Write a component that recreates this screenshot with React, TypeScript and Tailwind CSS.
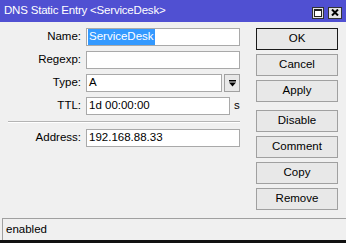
import React from "react";

const font = { fontFamily: '"Liberation Sans", Arial, sans-serif' };

function Field({ label, children }: { label: string; children: React.ReactNode }) {
  return (
    <div className="flex items-center h-[18px]">
      <div className="w-[82px] text-right pr-[1px]">{label}</div>
      <div className="ml-[4px] flex items-center">{children}</div>
    </div>
  );
}

function Input({ width, value, selected }: { width: string; value?: string; selected?: boolean }) {
  return (
    <div className={`${width} h-[18px] bg-white border border-[#a9a9a9] flex items-center px-[1px] leading-none`}>
      {selected ? (
        <span className="bg-[#3399ff] text-white px-[1px] py-[2px]">{value}</span>
      ) : (
        <span className="px-[1px]">{value}</span>
      )}
    </div>
  );
}

function Btn({ label, primary, className = "" }: { label: string; primary?: boolean; className?: string }) {
  return (
    <div
      className={`w-[82px] h-[22px] flex items-center justify-center bg-[#e8e8e8] border ${
        primary ? "border-[#1a1a1a]" : "border-[#a0a0a0]"
      } ${className}`}
    >
      {label}
    </div>
  );
}

export default function App() {
  return (
    <div className="w-[346px] h-[243px] flex flex-col bg-[#f0f0f0] text-black text-[11.5px] overflow-hidden" style={font}>
      {/* title bar */}
      <div className="h-[22px] bg-[#5050d2] flex items-center pl-[4px] pr-[4px] text-white text-[11.5px]">
        <span className="flex-1 tracking-[-0.2px]">DNS Static Entry &lt;ServiceDesk&gt;</span>
        <div className="flex gap-[4px] mt-[3px]">
          <div className="w-[12px] h-[12px] bg-[#e4e4e4] border border-[#333] flex items-center justify-center">
            <div className="w-[8px] h-[8px] border border-[#222] border-t-2 bg-white" />
          </div>
          <div className="w-[14px] h-[12px] bg-[#e4e4e4] border border-[#333] flex items-center justify-center">
            <svg width="8" height="7" viewBox="0 0 8 7">
              <path d="M1 0.5 L7 6.5 M7 0.5 L1 6.5" stroke="#000" strokeWidth="2" />
            </svg>
          </div>
        </div>
      </div>

      {/* body */}
      <div className="flex-1 flex">
        <div className="w-[248px] pt-[6px] flex flex-col gap-[5px]">
          <Field label="Name:">
            <Input width="w-[154px]" value="ServiceDesk" selected />
          </Field>
          <Field label="Regexp:">
            <Input width="w-[154px]" />
          </Field>
          <Field label="Type:">
            <Input width="w-[136px]" value="A" />
            <div className="ml-[2px] w-[16px] h-[18px] bg-[#e8e8e8] border border-[#a0a0a0] flex items-center justify-center">
              <svg width="7" height="7" viewBox="0 0 7 7">
                <rect x="0" y="0" width="7" height="1.5" fill="#000" />
                <path d="M0 2.5 H7 L3.5 6.5 Z" fill="#000" />
              </svg>
            </div>
          </Field>
          <Field label="TTL:">
            <Input width="w-[144px]" value="1d 00:00:00" />
            <span className="ml-[4px]">s</span>
          </Field>
          <div className="ml-[8px] w-[232px] h-[2px] mt-[1px] mb-[1px] border-t border-[#b4b4b4] border-b border-b-white" />
          <Field label="Address:">
            <Input width="w-[154px]" value="192.168.88.33" />
          </Field>
        </div>

        <div className="pt-[6px] pl-[8px] flex flex-col gap-[4px]">
          <Btn label="OK" primary />
          <Btn label="Cancel" />
          <Btn label="Apply" />
          <Btn label="Disable" className="mt-[4px]" />
          <Btn label="Comment" />
          <Btn label="Copy" />
          <Btn label="Remove" />
        </div>
      </div>

      {/* status bar */}
      <div className="h-[22px] ml-[2px] border-t border-l border-[#a0a0a0] flex items-center pl-[3px]">
        enabled
      </div>
      <div className="h-[3px] bg-[#111]" />
    </div>
  );
}
